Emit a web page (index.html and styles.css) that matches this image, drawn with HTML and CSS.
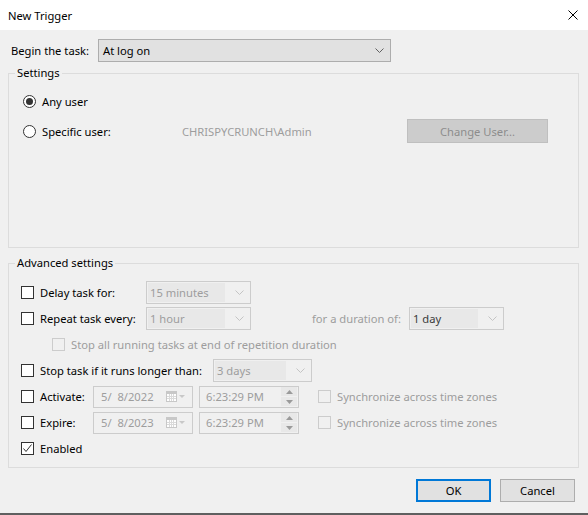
FILE: index.html
```html
<!DOCTYPE html>
<html lang="en">

<head>
    <meta charset="UTF-8">
    <title>New Trigger</title>
    <link rel="stylesheet" href="styles.css">
</head>

<body>
    <div class="window">
        <div class="titlebar">
            <span class="title">New Trigger</span>
            <svg class="close" width="10" height="10" viewBox="0 0 10 10">
                <path d="M0.5 0.5 L9.5 9.5 M9.5 0.5 L0.5 9.5" stroke="#000" stroke-width="1" fill="none" />
            </svg>
        </div>

        <div class="content">
            <div class="begin-row">
                <span class="begin-label">Begin the task:</span>
                <div class="combo begin">
                    <span>At log on</span>
                    <svg class="chevron" width="9" height="5" viewBox="0 0 9 5">
                        <polyline points="0.5,0.5 4.5,4.5 8.5,0.5" stroke="#606060" fill="none" />
                    </svg>
                </div>
            </div>

            <!-- 设置 -->
            <fieldset class="group">
                <legend>Settings</legend>
                <div class="settings-body">
                    <div class="radio-row">
                        <span class="radio checked"></span>
                        <span>Any user</span>
                    </div>
                    <div class="radio-row second">
                        <span class="radio"></span>
                        <span class="user-label">Specific user:</span>
                        <span class="account">CHRISPYCRUNCH\Admin</span>
                        <button class="change-user" disabled>Change User...</button>
                    </div>
                </div>
            </fieldset>

            <!-- 高级设置 -->
            <fieldset class="group advanced">
                <legend>Advanced settings</legend>
                <div class="advanced-body">
                    <div class="row">
                        <span class="check"></span>
                        <span class="lbl-delay">Delay task for:</span>
                        <div class="combo off w105">
                            <span class="field">15 minutes</span>
                            <svg class="chevron" width="9" height="5" viewBox="0 0 9 5">
                                <polyline points="0.5,0.5 4.5,4.5 8.5,0.5" stroke="#c4c4c4" fill="none" />
                            </svg>
                        </div>
                    </div>
                    <div class="row">
                        <span class="check"></span>
                        <span class="lbl-delay">Repeat task every:</span>
                        <div class="combo off w105">
                            <span class="field">1 hour</span>
                            <svg class="chevron" width="9" height="5" viewBox="0 0 9 5">
                                <polyline points="0.5,0.5 4.5,4.5 8.5,0.5" stroke="#c4c4c4" fill="none" />
                            </svg>
                        </div>
                        <span class="lbl-duration muted">for a duration of:</span>
                        <div class="combo off w95">
                            <span class="field dark">1 day</span>
                            <svg class="chevron" width="9" height="5" viewBox="0 0 9 5">
                                <polyline points="0.5,0.5 4.5,4.5 8.5,0.5" stroke="#c4c4c4" fill="none" />
                            </svg>
                        </div>
                    </div>
                    <div class="row indent">
                        <span class="check disabled"></span>
                        <span class="muted">Stop all running tasks at end of repetition duration</span>
                    </div>
                    <div class="row">
                        <span class="check"></span>
                        <span class="lbl-stop">Stop task if it runs longer than:</span>
                        <div class="combo off w99">
                            <span class="field">3 days</span>
                            <svg class="chevron" width="9" height="5" viewBox="0 0 9 5">
                                <polyline points="0.5,0.5 4.5,4.5 8.5,0.5" stroke="#c4c4c4" fill="none" />
                            </svg>
                        </div>
                    </div>
                    <div class="row">
                        <span class="check"></span>
                        <span class="lbl-date">Activate:</span>
                        <div class="picker date">
                            <span class="value">5/  8/2022</span>
                            <svg class="calendar" width="20" height="11" viewBox="0 0 20 11">
                                <rect x="0.5" y="0.5" width="10" height="10" fill="#fff" stroke="#c8c8c8" />
                                <rect x="1" y="1" width="9" height="2" fill="#c8c8c8" />
                                <path d="M3.5 3 V10 M5.5 3 V10 M7.5 3 V10 M1 5.5 H10 M1 7.5 H10" stroke="#dadada" />
                                <polygon points="13,4 19,4 16,7" fill="#c8c8c8" />
                            </svg>
                        </div>
                        <div class="picker time">
                            <span class="value">6:23:29 PM</span>
                            <div class="spinner">
                                <span class="spin"><svg width="7" height="4" viewBox="0 0 7 4"><polygon points="0,4 7,4 3.5,0" fill="#9a9a9a" /></svg></span>
                                <span class="spin"><svg width="7" height="4" viewBox="0 0 7 4"><polygon points="0,0 7,0 3.5,4" fill="#9a9a9a" /></svg></span>
                            </div>
                        </div>
                        <span class="check disabled sync"></span>
                        <span class="muted">Synchronize across time zones</span>
                    </div>
                    <div class="row">
                        <span class="check"></span>
                        <span class="lbl-date">Expire:</span>
                        <div class="picker date">
                            <span class="value">5/  8/2023</span>
                            <svg class="calendar" width="20" height="11" viewBox="0 0 20 11">
                                <rect x="0.5" y="0.5" width="10" height="10" fill="#fff" stroke="#c8c8c8" />
                                <rect x="1" y="1" width="9" height="2" fill="#c8c8c8" />
                                <path d="M3.5 3 V10 M5.5 3 V10 M7.5 3 V10 M1 5.5 H10 M1 7.5 H10" stroke="#dadada" />
                                <polygon points="13,4 19,4 16,7" fill="#c8c8c8" />
                            </svg>
                        </div>
                        <div class="picker time">
                            <span class="value">6:23:29 PM</span>
                            <div class="spinner">
                                <span class="spin"><svg width="7" height="4" viewBox="0 0 7 4"><polygon points="0,4 7,4 3.5,0" fill="#9a9a9a" /></svg></span>
                                <span class="spin"><svg width="7" height="4" viewBox="0 0 7 4"><polygon points="0,0 7,0 3.5,4" fill="#9a9a9a" /></svg></span>
                            </div>
                        </div>
                        <span class="check disabled sync"></span>
                        <span class="muted">Synchronize across time zones</span>
                    </div>
                    <div class="row">
                        <span class="check">
                            <svg width="11" height="11" viewBox="0 0 11 11">
                                <polyline points="1.5,5.5 4,8.5 9.5,1.5" stroke="#333" stroke-width="1" fill="none" />
                            </svg>
                        </span>
                        <span>Enabled</span>
                    </div>
                </div>
            </fieldset>

            <div class="buttons">
                <button class="btn default">OK</button>
                <button class="btn">Cancel</button>
            </div>
        </div>
    </div>
</body>

</html>
```

FILE: styles.css
```css
* {
    box-sizing: border-box;
}

html,
body {
    margin: 0;
}

body {
    font-family: "Noto Sans", "Liberation Sans", sans-serif;
    font-size: 11.2px;
    color: #000;
    background: #f0f0f0;
    white-space: nowrap;
}

.window {
    width: 588px;
    height: 515px;
    display: flex;
    flex-direction: column;
    border-bottom: 2px solid #5f5f5f;
}


/* 标题栏 */

.titlebar {
    height: 30px;
    flex-shrink: 0;
    display: flex;
    align-items: center;
    justify-content: space-between;
    padding: 0 10px 0 8px;
    background: #fff;
}

.content {
    flex: 1;
    padding: 9px 9px 0 8px;
}

.begin-row {
    display: flex;
    align-items: center;
    height: 23px;
    padding-left: 3px;
}

.begin-label {
    width: 87px;
}


/* 下拉框 */

.combo {
    display: flex;
    align-items: center;
    height: 23px;
    border: 1px solid #adadad;
    background: #e1e1e1;
    padding: 0 6px 0 4px;
}

.combo.begin {
    width: 293px;
}

.combo .chevron {
    margin-left: auto;
}

.combo.off {
    border-color: #cccccc;
    background: #f0f0f0;
    padding: 1px 6px 1px 1px;
    color: #9d9d9d;
}

.combo.off .field {
    align-self: stretch;
    display: flex;
    align-items: center;
    padding-left: 2px;
    background: #e8e8e8;
    flex: 1;
    margin-right: 10px;
}

.combo.off .field.dark {
    color: #3a3a3a;
}

.w105 {
    width: 105px;
}

.w99 {
    width: 99px;
}

.w95 {
    width: 95px;
}


/* 分组框 */

.group {
    margin: 3px 0 0;
    padding: 0;
    border: 1px solid #dcdcdc;
    min-width: 0;
}

.group legend {
    margin-left: 6px;
    padding: 0 2px;
    line-height: 16px;
}

.group.advanced {
    margin-top: 7px;
}

.settings-body {
    padding: 8px 0 104px 14px;
}

.radio-row {
    display: flex;
    align-items: center;
    height: 24px;
}

.radio-row.second {
    margin-top: 6px;
}

.radio {
    width: 13px;
    height: 13px;
    border: 1px solid #333;
    border-radius: 50%;
    background: #fff;
    margin-right: 6px;
    display: flex;
    align-items: center;
    justify-content: center;
}

.radio.checked::after {
    content: "";
    width: 7px;
    height: 7px;
    border-radius: 50%;
    background: #333;
}

.user-label {
    width: 140px;
}

.account {
    width: 225px;
    color: #9d9d9d;
}

.change-user {
    width: 141px;
    height: 24px;
    font: inherit;
    color: #8c8c8c;
    background: #cccccc;
    border: 1px solid #bfbfbf;
}


/* 高级设置 */

.advanced-body {
    display: flex;
    flex-direction: column;
    gap: 3px;
    padding: 10px 0 7px 12px;
}

.row {
    display: flex;
    align-items: center;
    height: 23px;
}

.row.indent {
    padding-left: 31px;
}

.check {
    width: 13px;
    height: 13px;
    flex-shrink: 0;
    border: 1px solid #333;
    background: #fff;
    margin-right: 6px;
    display: flex;
    align-items: center;
    justify-content: center;
}

.check.disabled {
    border-color: #cccccc;
    background: #f0f0f0;
}

.check.sync {
    margin-left: 19px;
}

.muted {
    color: #9d9d9d;
}

.lbl-delay {
    width: 106px;
}

.lbl-duration {
    width: 97px;
    margin-left: 61px;
}

.lbl-stop {
    width: 173px;
}

.lbl-date {
    width: 53px;
}


/* 日期和时间 */

.picker {
    display: flex;
    align-items: center;
    width: 100px;
    height: 22px;
    border: 1px solid #cccccc;
    color: #9d9d9d;
}

.picker .value {
    white-space: pre;
}

.picker.date {
    padding-left: 7px;
}

.picker.date .calendar {
    margin-left: auto;
    margin-right: 6px;
}

.picker.time {
    margin-left: 6px;
    padding-left: 6px;
}

.spinner {
    margin-left: auto;
    margin-right: 1px;
    display: flex;
    flex-direction: column;
    gap: 1px;
}

.spin {
    width: 16px;
    height: 9px;
    background: #e8e8e8;
    display: flex;
    align-items: center;
    justify-content: center;
}


/* 底部按钮 */

.buttons {
    display: flex;
    justify-content: flex-end;
    gap: 9px;
    margin: 11px 4px 0 0;
}

.btn {
    width: 75px;
    height: 23px;
    font: inherit;
    color: #000;
    background: #e1e1e1;
    border: 1px solid #adadad;
}

.btn.default {
    border: 2px solid #0078d7;
}
```
